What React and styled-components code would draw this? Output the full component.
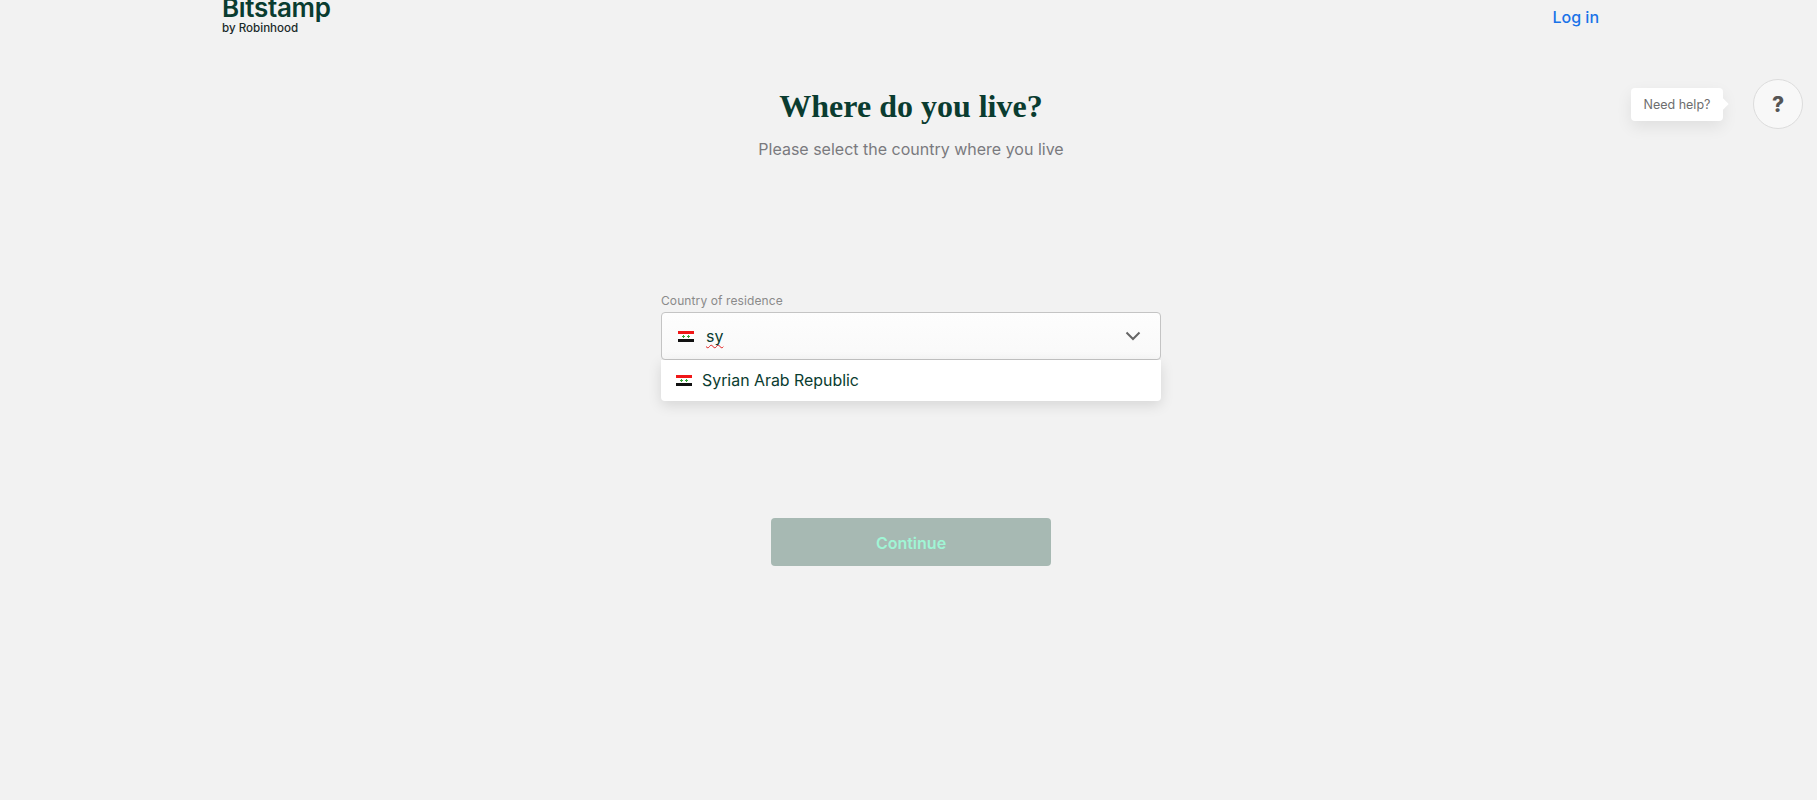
import React from "react";
import styled, { createGlobalStyle } from "styled-components";

const GlobalStyle = createGlobalStyle`
  html, body {
    margin: 0;
    padding: 0;
    height: 100%;
    background: #f2f2f2;
    font-family: Inter, "Noto Sans", sans-serif;
  }
`;

const Page = styled.div`
  position: relative;
  height: 800px;
  overflow: hidden;
  padding: 0 217px 0 222px;
  display: flex;
  flex-direction: column;
  align-items: center;
`;

const Header = styled.header`
  width: 100%;
  height: 34px;
  display: flex;
  justify-content: space-between;
  align-items: flex-start;
`;

const Logo = styled.div`
  display: flex;
  flex-direction: column;
  margin-top: -7px;
`;

const LogoName = styled.span`
  font-size: 26px;
  line-height: 30px;
  font-weight: 600;
  letter-spacing: -0.3px;
  color: #0a3c30;
`;

const LogoSub = styled.span`
  font-size: 11.6px;
  line-height: 14px;
  margin-top: -2px;
  font-weight: 500;
  color: #1a2a2a;
`;

const LoginLink = styled.a`
  margin: 8px 1px 0 0;
  font-size: 16px;
  line-height: 19px;
  font-weight: 500;
  color: #1a73e8;
`;

const Title = styled.h1`
  margin: 53px 0 0;
  font-family: "Liberation Serif", serif;
  font-size: 32px;
  line-height: 38px;
  font-weight: 700;
  color: #0a3c30;
`;

const Subtitle = styled.p`
  margin: 12px 0 0;
  font-size: 16px;
  line-height: 24px;
  color: #7a7a7e;
`;

const Field = styled.div`
  width: 500px;
  margin-top: 132px;
  display: flex;
  flex-direction: column;
`;

const FieldLabel = styled.label`
  font-size: 12px;
  letter-spacing: 0.1px;
  line-height: 16px;
  margin-bottom: 3px;
  color: #8a8a8a;
`;

const SelectBox = styled.div`
  box-sizing: border-box;
  height: 48px;
  padding: 0 19px 0 16px;
  display: flex;
  align-items: center;
  gap: 12px;
  border: 1px solid #c4c4c4;
  border-radius: 4px;
  background: linear-gradient(#fdfdfd, #f9f9f9);
`;

const Typed = styled.span`
  flex: 1;
  font-size: 16px;
  color: #0a3c30;
  text-decoration: underline wavy #e02020 1px;
  text-underline-offset: 2px;
  text-decoration-skip-ink: none;
`;

const Menu = styled.div`
  height: 41px;
  padding: 0 15px;
  display: flex;
  align-items: center;
  gap: 10px;
  background: #fff;
  border-radius: 0 0 4px 4px;
  box-shadow: 0 4px 14px rgba(0, 0, 0, 0.12);
`;

const MenuText = styled.span`
  font-size: 15.9px;
  line-height: 20px;
  padding-top: 1px;
  color: #0a3c30;
`;

const ContinueButton = styled.button`
  width: 280px;
  height: 48px;
  margin-top: 117px;
  padding: 2px 0 0;
  border: none;
  border-radius: 4px;
  background: #a7b9b3;
  color: #a0f5d5;
  font-family: inherit;
  font-size: 16px;
  font-weight: 600;
`;

const HelpWidget = styled.div`
  position: absolute;
  top: 79px;
  right: 14px;
  display: flex;
  align-items: center;
  gap: 30px;
`;

const Tooltip = styled.div`
  position: relative;
  width: 92px;
  height: 33px;
  display: flex;
  align-items: center;
  justify-content: center;
  background: #fff;
  border-radius: 4px;
  font-size: 12.5px;
  color: #6e6e6e;
  box-shadow: 0 6px 16px rgba(0, 0, 0, 0.08);

  &::after {
    content: "";
    position: absolute;
    right: -4px;
    top: 12.5px;
    width: 8px;
    height: 8px;
    background: #fff;
    transform: rotate(45deg);
  }
`;

const HelpButton = styled.div`
  box-sizing: border-box;
  width: 50px;
  height: 50px;
  display: flex;
  align-items: center;
  justify-content: center;
  border: 1px solid #dcdcdc;
  border-radius: 50%;
  background: #f8f8f8;
  font-size: 21px;
  font-weight: 800;
  color: #555;
`;

const SyriaFlag = () => (
  <svg width="16" height="11" viewBox="0 0 16 11" style={{ flexShrink: 0 }}>
    <rect width="16" height="11" fill="#fff" />
    <rect width="16" height="3" fill="#f01818" />
    <rect y="8" width="16" height="3" fill="#111" />
    <path
      d="M4 5h1V4h1v1h1v1H6v1H5V6H4zM9 5h1V4h1v1h1v1h-1v1h-1V6H9z"
      fill="#3aa63a"
    />
  </svg>
);

const Chevron = () => (
  <svg width="16" height="10" viewBox="0 0 16 10" fill="none">
    <path d="M1.5 1.5L8 8l6.5-6.5" stroke="#666" strokeWidth="2" />
  </svg>
);

export default function App() {
  return (
    <>
      <GlobalStyle />
      <Page>
        <Header>
          <Logo>
            <LogoName>Bitstamp</LogoName>
            <LogoSub>by Robinhood</LogoSub>
          </Logo>
          <LoginLink>Log in</LoginLink>
        </Header>
        <Title>Where do you live?</Title>
        <Subtitle>Please select the country where you live</Subtitle>
        <Field>
          <FieldLabel>Country of residence</FieldLabel>
          <SelectBox>
            <SyriaFlag />
            <Typed>sy</Typed>
            <Chevron />
          </SelectBox>
          <Menu>
            <SyriaFlag />
            <MenuText>Syrian Arab Republic</MenuText>
          </Menu>
        </Field>
        <ContinueButton disabled>Continue</ContinueButton>
        <HelpWidget>
          <Tooltip>Need help?</Tooltip>
          <HelpButton>?</HelpButton>
        </HelpWidget>
      </Page>
    </>
  );
}
